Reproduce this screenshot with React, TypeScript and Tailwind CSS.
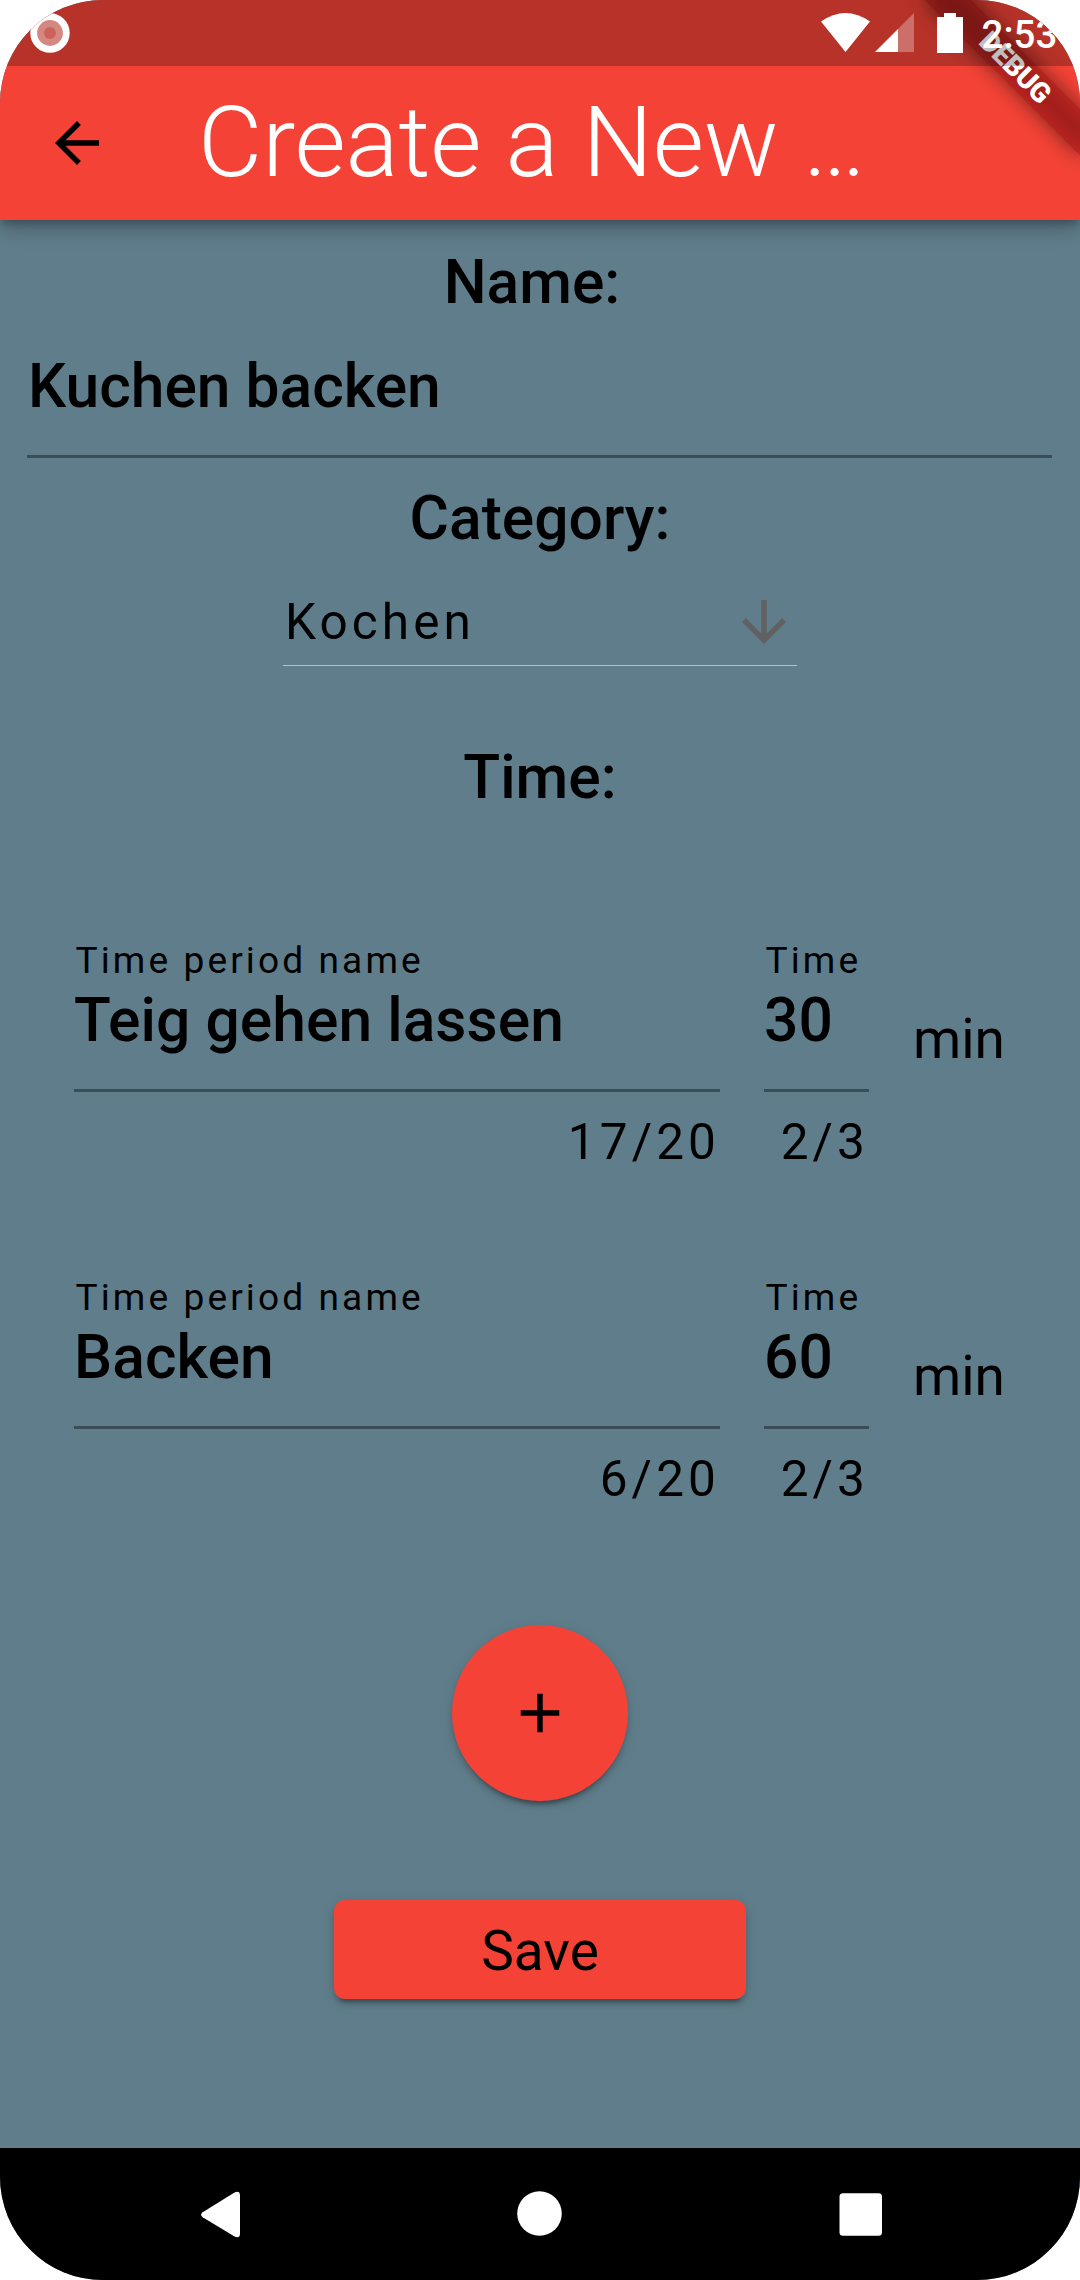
import React from "react";

type Period = { name: string; nameCount: string; time: string; timeCount: string };

const periods: Period[] = [
  { name: "Teig gehen lassen", nameCount: "17/20", time: "30", timeCount: "2/3" },
  { name: "Backen", nameCount: "6/20", time: "60", timeCount: "2/3" },
];

function MaterialIcon({ d, className }: { d: string; className?: string }) {
  return (
    <svg viewBox="0 0 24 24" className={`size-[66px] shrink-0 ${className ?? ""}`} fill="currentColor">
      <path d={d} />
    </svg>
  );
}

function DebugBanner() {
  return (
    <div className="pointer-events-none absolute top-0 right-0 z-20 size-[240px] overflow-hidden">
      <div className="absolute top-0 left-full h-0 w-0 origin-top-left rotate-45">
        <div className="absolute top-[77px] -left-[110px] h-[33px] w-[220px] bg-black/50 blur-[10px]" />
        <div className="absolute top-[77px] -left-[110px] flex h-[33px] w-[220px] items-center justify-center bg-[#b71c1c]/63 pl-[4px] text-[28px] leading-none font-black tracking-[-0.4px] text-white">
          DEBUG
        </div>
      </div>
    </div>
  );
}

function StatusBar() {
  return (
    <div className="absolute inset-x-0 top-0 z-30 flex h-[66px] bg-black/25">
      <svg viewBox="0 0 66 66" className="ml-[17px] size-[66px]">
        <circle cx="33" cy="33" r="16.5" fill="#fff" fillOpacity="0.42" />
        <circle cx="33" cy="33" r="16.3" fill="none" stroke="#fff" strokeWidth="6.8" />
        <circle cx="33" cy="33" r="6" fill="#c4453a" fillOpacity="0.55" />
      </svg>
      <svg viewBox="0 0 280 66" className="ml-auto h-[66px] w-[280px]" fill="#fff">
        <path d="M21 21.5Q45.500 4.500 70 21.500L45.500 52Z" />
        <path d="M75 52L98 29V52Z" />
        <path d="M98 29L114 13V52H98Z" fillOpacity="0.3" />
        <path d="M144 13H156V17H163V53H137V17H144Z" />
        <text x="181.500" y="48.300" fontSize="38.500" fontWeight="500" fontFamily="Roboto, sans-serif">
          2:53
        </text>
      </svg>
    </div>
  );
}

function AppBar() {
  return (
    <header className="relative z-10 flex h-[220px] shrink-0 items-center bg-[#f44336] pt-[66px] shadow-[0_5px_7px_-2px_rgba(0,0,0,0.2),0_11px_14px_rgba(0,0,0,0.14),0_3px_28px_rgba(0,0,0,0.12)]">
      <MaterialIcon
        className="ml-[44px] text-black"
        d="M20 11H7.830l5.590-5.590L12 4l-8 8 8 8 1.410-1.410L7.830 13H20v-2z"
      />
      <h1 className="ml-[88px] pb-[3px] text-[99px] leading-[116px] font-light tracking-[-0.1px] whitespace-nowrap text-white">
        Create a New …
      </h1>
    </header>
  );
}

function Heading({ children, className }: { children: React.ReactNode; className: string }) {
  return <h2 className={`text-center text-[60.5px] leading-[70px] font-medium ${className}`}>{children}</h2>;
}

function CountedField({ label, value, count, className }: { label: string; value: string; count: string; className: string }) {
  return (
    <div className={className}>
      <div className="pl-[1.5px] text-[37.1px] leading-[44px] tracking-[3.1px] whitespace-nowrap">{label}</div>
      <div className="mt-[3px] text-[60.5px] leading-[70px] font-medium tracking-[0.05px] whitespace-nowrap">{value}</div>
      <div className="mt-[33px] h-[3px] bg-black/38" />
      <div className="mt-[21px] text-right text-[49.5px] leading-[58px] tracking-[4.1px] whitespace-nowrap">{count}</div>
    </div>
  );
}

function PeriodRow({ period }: { period: Period }) {
  return (
    <div className="flex h-[232px] pl-[74px]">
      <CountedField className="w-[646px]" label="Time period name" value={period.name} count={period.nameCount} />
      <CountedField className="ml-[44px] w-[105px]" label="Time" value={period.time} count={period.timeCount} />
      <span className="mt-[68px] ml-[44px] text-[55px] leading-[64px]">min</span>
    </div>
  );
}

function NavBar() {
  return (
    <nav className="flex h-[132px] shrink-0 bg-black">
      <svg viewBox="0 0 1080 132" className="h-[132px] w-full" fill="#fff">
        <path d="M202.700 64.300L234.500 44.500Q240 42 240 47.500V85.500Q240 91 234.500 88.500L202.700 69.300Q199.500 66.800 202.700 64.300Z" />
        <circle cx="539.500" cy="65.500" r="22.300" />
        <rect x="839.500" y="45.300" width="42.500" height="42.500" rx="3.500" />
      </svg>
    </nav>
  );
}

export default function App() {
  return (
    <div className="h-[2280px] w-[1080px] bg-white">
      <div className="relative flex h-full w-full flex-col overflow-hidden rounded-[103px] bg-[#607d8b] font-['Roboto',sans-serif] text-black">
        <AppBar />
        <main className="flex min-h-0 flex-1 flex-col">
          <Heading className="mt-[28px] pr-[16px]">Name:</Heading>
          <div className="mr-[28px] ml-[27px] mt-[34px] border-b-[3px] border-black/38 pb-[33px] pl-[1px] text-[60.5px] leading-[70px] font-medium">
            Kuchen backen
          </div>
          <Heading className="mt-[26px]">Category:</Heading>
          <div className="mt-[35px] flex h-[77px] w-[514px] items-start justify-between self-center border-b border-[#bdbdbd]">
            <span className="mt-[4px] ml-[2px] text-[49.5px] leading-[58px] tracking-[4.1px]">Kochen</span>
            <MaterialIcon
              className="text-[#616161]"
              d="M20 12l-1.410-1.410L13 16.170V4h-2v12.170l-5.580-5.590L4 12l8 8 8-8z"
            />
          </div>
          <Heading className="mt-[77px]">Time:</Heading>
          <div className="mt-[126px] flex flex-col gap-[105px]">
            {periods.map((p) => (
              <PeriodRow key={p.name} period={p} />
            ))}
          </div>
          <button className="mt-[117px] flex size-[176px] shrink-0 items-center justify-center self-center rounded-full bg-[#f44336] shadow-[0_8px_3px_-5px_rgba(0,0,0,0.2),0_5px_5px_rgba(0,0,0,0.14),0_3px_14px_rgba(0,0,0,0.12)]">
            <MaterialIcon d="M19 13h-6v6h-2v-6H5v-2h6V5h2v6h6v2z" />
          </button>
          <button className="mt-[99px] flex h-[99px] w-[412px] shrink-0 items-center justify-center self-center rounded-[11px] bg-[#f44336] pt-[2px] text-[55px] leading-[66px] shadow-[0_8px_3px_-5px_rgba(0,0,0,0.2),0_5px_5px_rgba(0,0,0,0.14),0_3px_14px_rgba(0,0,0,0.12)]">
            Save
          </button>
        </main>
        <NavBar />
        <DebugBanner />
        <StatusBar />
      </div>
    </div>
  );
}
